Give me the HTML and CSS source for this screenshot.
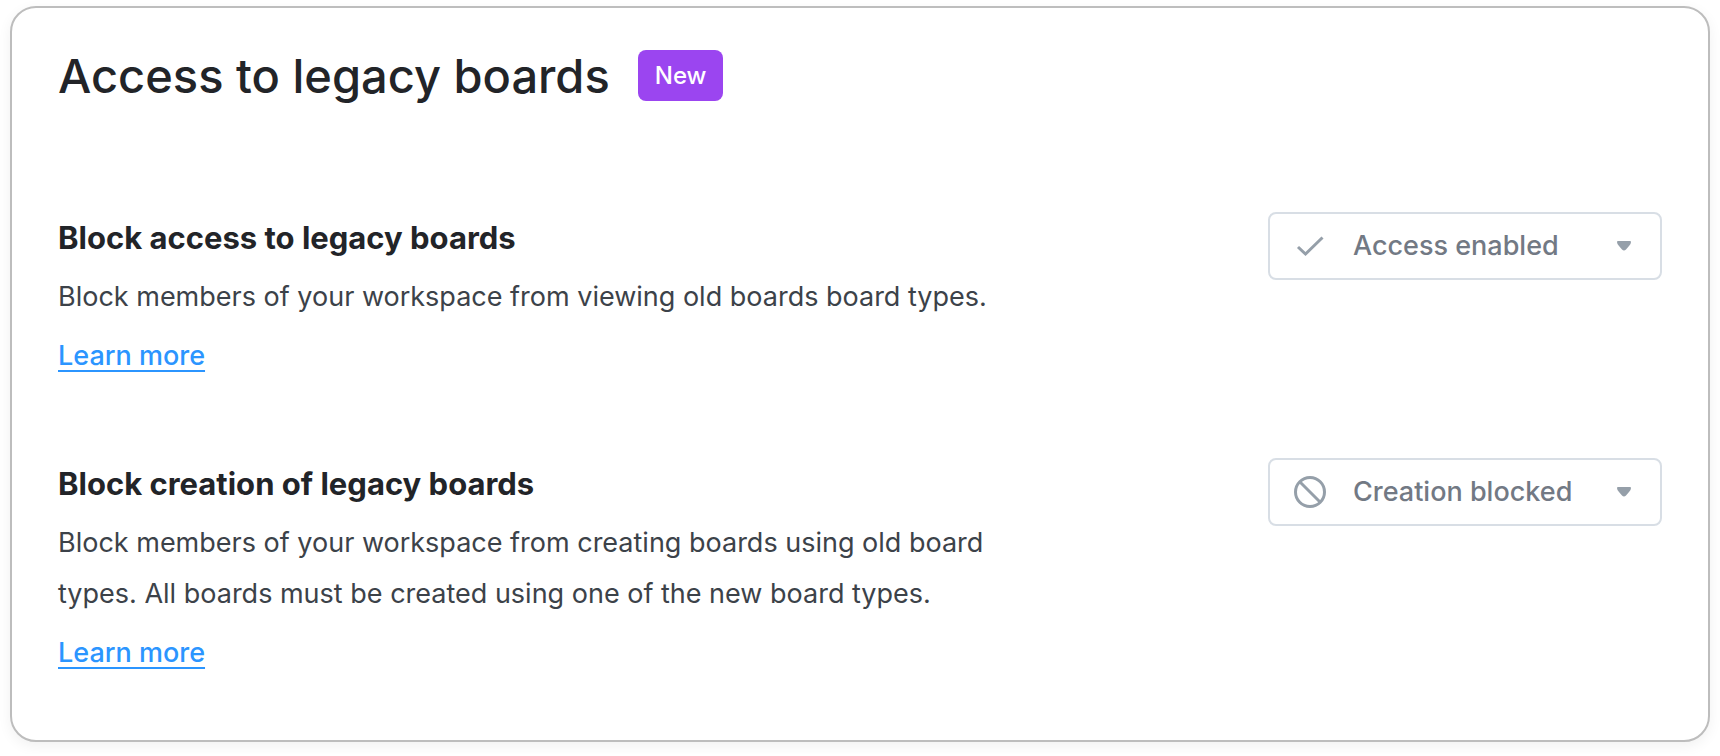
FILE: index.html
```html
<!DOCTYPE html>
<html lang="en">

<head>
    <meta charset="UTF-8">
    <meta name="viewport" content="width=device-width, initial-scale=1.0">
    <title>Access to legacy boards</title>
    <link rel="stylesheet" href="styles.css">
</head>

<body>
    <main class="card">
        <header class="card-header">
            <h1>Access to legacy boards</h1>
            <span class="badge">New</span>
        </header>

        <section class="setting">
            <div class="setting-text">
                <h2><label for="board_access">Block access to legacy boards</label></h2>
                <p>Block members of your workspace from viewing old boards board types.</p>
                <a href="#access">Learn more</a>
            </div>
            <div class="dropdown">
                <svg class="icon" viewBox="0 0 32 32" aria-hidden="true">
                    <path d="M4 17 L11.500 24 L28.500 7.500" />
                </svg>
                <select id="board_access" name="board_access">
                    <option selected>Access enabled</option>
                    <option>Access blocked</option>
                </select>
                <svg class="arrow" viewBox="0 0 14 10" aria-hidden="true">
                    <path d="M0 1 Q0 0 1 0 H13 Q14 0 14 1 Q14 3 12 5 L9 8.500 Q7 10.500 5 8.500 L2 5 Q0 3 0 1 Z" />
                </svg>
            </div>
        </section>

        <section class="setting">
            <div class="setting-text">
                <h2><label for="board_creation">Block creation of legacy boards</label></h2>
                <p>Block members of your workspace from creating boards using old board types. All boards must be created using one of the new board types.</p>
                <a href="#creation">Learn more</a>
            </div>
            <div class="dropdown">
                <svg class="icon" viewBox="0 0 32 32" aria-hidden="true">
                    <circle cx="16" cy="16" r="14.500" />
                    <path d="M6 6 L26 26" />
                </svg>
                <select id="board_creation" name="board_creation">
                    <option>Creation enabled</option>
                    <option selected>Creation blocked</option>
                </select>
                <svg class="arrow" viewBox="0 0 14 10" aria-hidden="true">
                    <path d="M0 1 Q0 0 1 0 H13 Q14 0 14 1 Q14 3 12 5 L9 8.500 Q7 10.500 5 8.500 L2 5 Q0 3 0 1 Z" />
                </svg>
            </div>
        </section>
    </main>
</body>

</html>
```

FILE: styles.css
```css
* {
    box-sizing: border-box;
}

body {
    font-family: Inter, "Liberation Sans", sans-serif;
    font-size: 27px;
    line-height: 51px;
    color: #3c4249;
    background-color: #ffffff;
    margin: 0;
    padding: 6px 10px 12px;
}

.card {
    background-color: #ffffff;
    padding: 42px 46px 62px;
    border: 2px solid #bdbdbd;
    border-radius: 26px;
    box-shadow: 0 4px 14px rgba(0, 0, 0, 0.06);
}

.card-header {
    display: flex;
    align-items: center;
    gap: 28px;
    margin-bottom: 111px;
}

h1,
h2,
p {
    margin: 0;
}

h1 {
    font-size: 47px;
    font-weight: 500;
    color: #222428;
}

.badge {
    padding: 0 17px;
    font-size: 24px;
    font-weight: 500;
    color: #ffffff;
    background-color: #9b45f0;
    border-radius: 8px;
}

.setting {
    display: flex;
    justify-content: space-between;
    align-items: flex-start;
    gap: 40px;
}

.setting + .setting {
    margin-top: 77px;
}

.setting-text {
    display: flex;
    flex-direction: column;
    align-items: flex-start;
    gap: 8px;
    max-width: 960px;
}

h2 {
    font-size: 31px;
    font-weight: 700;
    color: #222428;
}

a {
    font-weight: 500;
    color: #2b95ff;
    text-decoration-thickness: 2px;
    text-underline-offset: 5px;
}

.dropdown {
    position: relative;
    flex: none;
    width: 394px;
}

select {
    display: block;
    width: 100%;
    height: 68px;
    padding: 0 60px 2px 83px;
    font: inherit;
    font-weight: 500;
    color: #727984;
    background-color: #ffffff;
    border: 2px solid #d8dee5;
    border-radius: 8px;
    appearance: none;
    cursor: pointer;
}

.icon,
.arrow {
    position: absolute;
    pointer-events: none;
}

.icon {
    top: 18px;
    left: 26px;
    width: 32px;
    height: 32px;
    fill: none;
    stroke: #959fa9;
    stroke-width: 3;
}

.arrow {
    top: 29px;
    right: 31px;
    width: 14px;
    height: 10px;
    fill: #959fa9;
}
```
